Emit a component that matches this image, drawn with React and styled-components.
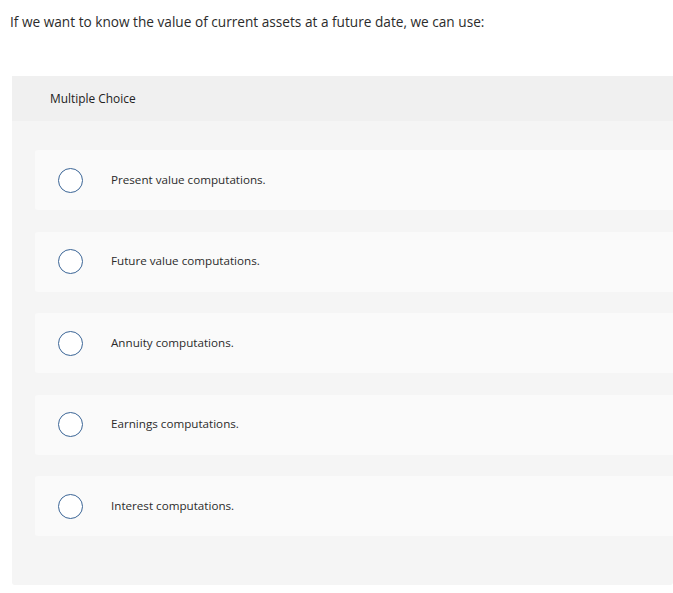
import React from "react";
import styled, { createGlobalStyle } from "styled-components";

const GlobalStyle = createGlobalStyle`
  html, body {
    margin: 0;
    padding: 0;
    background: #fff;
    overflow: hidden;
  }
  body {
    font-family: "Open Sans", "Liberation Sans", Arial, sans-serif;
    color: #333;
  }
`;

const options = [
  "Present value computations.",
  "Future value computations.",
  "Annuity computations.",
  "Earnings computations.",
  "Interest computations.",
];

const App = () => {
  return (
    <Page>
      <GlobalStyle />
      <Question>
        If we want to know the value of current assets at a future date, we can use:
      </Question>
      <Panel>
        <Header>Multiple Choice</Header>
        <List>
          {options.map((text) => (
            <Option key={text}>
              <Radio />
              <Label>{text}</Label>
            </Option>
          ))}
        </List>
      </Panel>
    </Page>
  );
};

export default App;

const Page = styled.div`
  padding-top: 13px;
`;

const Question = styled.div`
  padding-left: 10px;
  font-size: 13.65px;
  line-height: 18px;
  color: #2b2b2b;
`;

const Panel = styled.div`
  margin: 45px 0 0 12px;
  height: 509px;
  background: #f5f5f5;
  border-radius: 0 0 3px 3px;
`;

const Header = styled.div`
  height: 44px;
  padding-bottom: 1px;
  display: flex;
  align-items: center;
  padding-left: 38px;
  background: #f0f0f0;
  font-size: 11.9px;
  color: #222;
`;

const List = styled.div`
  display: flex;
  flex-direction: column;
  gap: 21.5px;
  padding: 29px 0 0 23px;
`;

const Option = styled.div`
  height: 60px;
  display: flex;
  align-items: center;
  background: #fafafa;
  border-radius: 3px 0 0 3px;
  padding-left: 23px;
`;

const Radio = styled.span`
  box-sizing: border-box;
  width: 25px;
  height: 25px;
  border: 1.5px solid #3b6596;
  border-radius: 50%;
  background: #fff;
  flex: none;
`;

const Label = styled.span`
  margin-left: 28px;
  padding-bottom: 2px;
  font-size: 11.65px;
  color: #2b2b2b;
`;
